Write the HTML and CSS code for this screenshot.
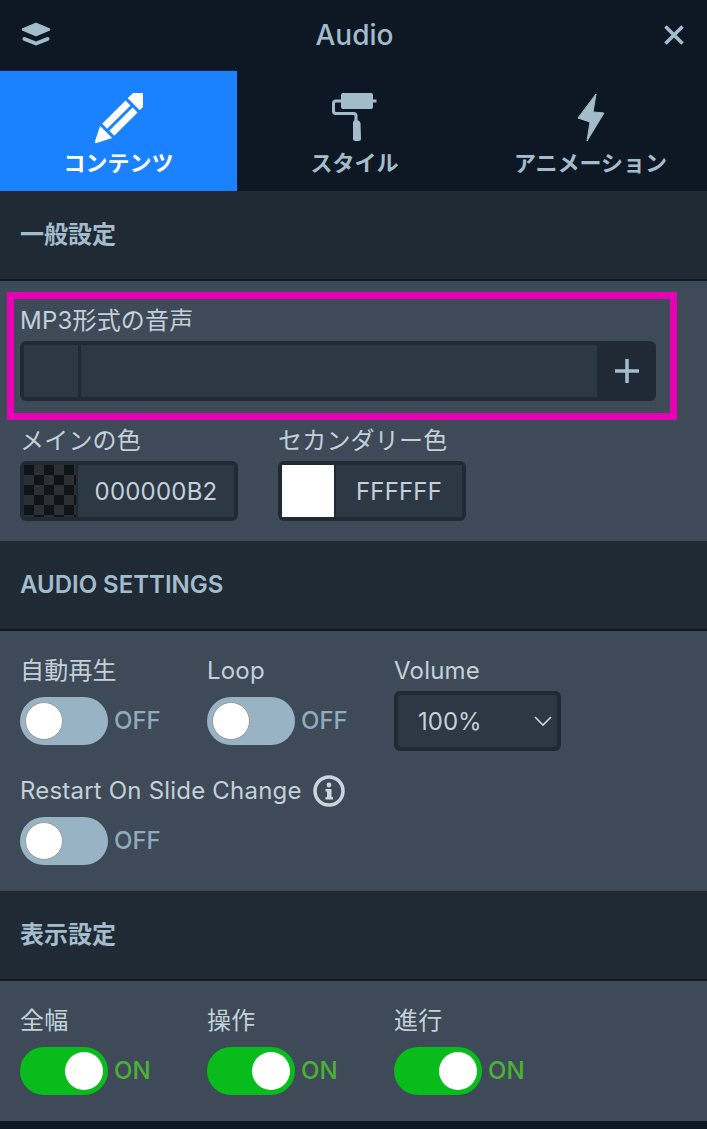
FILE: index.html
```html
<!DOCTYPE html>
<html lang="ja">
<head>
    <meta charset="UTF-8">
    <meta name="viewport" content="width=device-width, initial-scale=1.0">
    <title>Audio</title>
    <link rel="stylesheet" href="styles.css">
</head>
<body>
    <div class="panel">
        <div class="topbar">
            <svg class="layers" viewBox="0 0 30 30"><path d="M15 4l13 5.500-13 5.500L2 9.500z" stroke="#a3bccb" stroke-width="2.500" stroke-linejoin="round" fill="#a3bccb"/><path d="M3.500 19L15 23.500 26.500 19" stroke="#a3bccb" stroke-width="4" stroke-linejoin="round" stroke-linecap="round" fill="none"/></svg>
            <div class="title">Audio</div>
            <svg class="close" viewBox="0 0 22 22"><path d="M2.500 2.500l17 17M19.500 2.500l-17 17" stroke="#a3bccb" stroke-width="3.600" fill="none"/></svg>
        </div>

        <div class="tabs">
            <div class="tab active">
                <svg class="tab-icon" viewBox="0 0 48 50">
                    <g transform="translate(0.500 49.500) rotate(-45)" fill="#fff">
                        <path d="M1 -1.500L15 -8.500V8.500L1 1.500a1.500 1.500 0 0 1 0 -3z"/>
                        <rect x="18" y="-8.500" width="33" height="7"/>
                        <rect x="18" y="1.500" width="33" height="7"/>
                        <path d="M54 -8.500h6a8.500 8.500 0 0 1 0 17h-6z"/>
                    </g>
                </svg>
                <span>コンテンツ</span>
            </div>
            <div class="tab">
                <svg class="tab-icon" viewBox="0 0 48 50"><rect x="10" y="0" width="32" height="16" rx="2" fill="#a3bccb"/><rect x="42" y="6.500" width="3.500" height="3" fill="#a3bccb"/><path d="M11 8H5a2.500 2.500 0 0 0-2.500 2.500V18A2.500 2.500 0 0 0 5 20.500h17.500a2.500 2.500 0 0 1 2.500 2.500v6" stroke="#a3bccb" stroke-width="3" fill="none"/><path d="M22 30c0-2 1-3 3-3s4 1 4.500 3l.5 15.500a2.500 2.500 0 0 1-2.500 2.500h-3a2.500 2.500 0 0 1-2.500-2.500z" fill="#a3bccb"/></svg>
                <span>スタイル</span>
            </div>
            <div class="tab">
                <svg class="tab-icon" viewBox="0 0 48 50"><path fill="#a3bccb" stroke="#a3bccb" stroke-linejoin="round" d="M30 1L12 25l12 4-3 19 17-28-11-1z"/></svg>
                <span>アニメーション</span>
            </div>
        </div>

        <div class="section-head">一般設定</div>
        <div class="section-body general">
            <div class="highlight">
                <div class="label">MP3形式の音声</div>
                <div class="file-field">
                    <div class="file-thumb"></div>
                    <div class="file-name"></div>
                    <div class="file-add">
                        <svg viewBox="0 0 24 24"><path d="M12 0v24M0 12h24" stroke="#a3bccb" stroke-width="3.500" fill="none"/></svg>
                    </div>
                </div>
            </div>
            <div class="colors">
                <div>
                    <div class="label">メインの色</div>
                    <div class="color-field">
                        <div class="swatch checker"></div>
                        <div class="color-value wide">000000B2</div>
                    </div>
                </div>
                <div>
                    <div class="label">セカンダリー色</div>
                    <div class="color-field">
                        <div class="swatch white"></div>
                        <div class="color-value">FFFFFF</div>
                    </div>
                </div>
            </div>
        </div>

        <div class="section-head">AUDIO SETTINGS</div>
        <div class="section-body audio">
            <div class="row">
                <div class="cell">
                    <div class="label">自動再生</div>
                    <div class="switch-line"><div class="switch"><i></i></div><span>OFF</span></div>
                </div>
                <div class="cell">
                    <div class="label">Loop</div>
                    <div class="switch-line"><div class="switch"><i></i></div><span>OFF</span></div>
                </div>
                <div class="cell">
                    <div class="label">Volume</div>
                    <div class="select">
                        <span>100%</span>
                        <svg viewBox="0 0 18 11"><path d="M1 1l8 8 8-8" stroke="#c9d6df" stroke-width="1.600" fill="none"/></svg>
                    </div>
                </div>
            </div>
            <div class="row">
                <div class="cell">
                    <div class="label nowrap">Restart On Slide Change
                        <svg class="info" viewBox="0 0 32 32"><circle cx="16" cy="16" r="14" stroke="#c9d6df" stroke-width="3.500" fill="none"/><rect x="14" y="14" width="4.500" height="10" fill="#c9d6df"/><rect x="12.500" y="22" width="7.500" height="2.500" fill="#c9d6df"/><rect x="12.500" y="14" width="4" height="2.500" fill="#c9d6df"/><circle cx="16" cy="10" r="2.400" fill="#c9d6df"/></svg>
                    </div>
                    <div class="switch-line"><div class="switch"><i></i></div><span>OFF</span></div>
                </div>
            </div>
        </div>

        <div class="section-head">表示設定</div>
        <div class="section-body display">
            <div class="row">
                <div class="cell">
                    <div class="label">全幅</div>
                    <div class="switch-line on"><div class="switch"><i></i></div><span>ON</span></div>
                </div>
                <div class="cell">
                    <div class="label">操作</div>
                    <div class="switch-line on"><div class="switch"><i></i></div><span>ON</span></div>
                </div>
                <div class="cell">
                    <div class="label">進行</div>
                    <div class="switch-line on"><div class="switch"><i></i></div><span>ON</span></div>
                </div>
            </div>
        </div>
    </div>
</body>
</html>
```

FILE: styles.css
```css
* {
    box-sizing: border-box;
}
html, body {
    margin: 0;
    height: 100%;
    background-color: #0e1824;
}
body {
    font-family: Inter, "Noto Sans CJK JP", sans-serif;
    color: #c3d0da;
    overflow: hidden;
}
.panel {
    width: 707px;
}
.topbar {
    display: flex;
    align-items: center;
    justify-content: space-between;
    height: 71px;
    padding: 0 22px 1px 21px;
    background-color: #0e1824;
}
.layers {
    width: 30px;
    height: 30px;
}
.close {
    width: 22px;
    height: 22px;
}
.title {
    margin-right: 5px;
    font-size: 28px;
    font-weight: 500;
    color: #a3bccb;
}
.tabs {
    display: flex;
    height: 120px;
    background-color: #0e1824;
}
.tab {
    display: flex;
    flex-direction: column;
    align-items: center;
    width: 235px;
    padding-top: 22px;
    font-size: 22px;
    font-weight: 700;
    color: #a3bccb;
}
.tab span {
    margin-top: 2px;
    white-space: nowrap;
}
.tab:last-child span {
    margin-left: 2px;
}
.tab.active {
    width: 237px;
    background-color: #1a82ff;
    color: #fff;
}
.tab-icon {
    width: 48px;
    height: 50px;
}
.section-head {
    height: 90px;
    padding: 29px 20px 0;
    font-size: 24px;
    font-weight: 600;
    line-height: 30px;
    color: #a3bccb;
    background-color: #1f2a35;
    border-bottom: 2px solid #0f1a26;
}
.section-body {
    background-color: #3e4a58;
}
.general {
    height: 260px;
    padding: 11px 0 0 7px;
}
.audio {
    height: 260px;
    padding: 24px 0 0 20px;
}
.display {
    height: 140px;
    padding: 24px 0 0 20px;
}
.label {
    height: 31px;
    padding-top: 1px;
    font-size: 24px;
    line-height: 30px;
    letter-spacing: 0.2px;
    color: #c3d0da;
}
.nowrap {
    display: flex;
    align-items: center;
    gap: 11px;
    white-space: nowrap;
}
.highlight {
    width: 670px;
    height: 128px;
    padding: 6px 14px 0 6px;
    border: 7px solid #e800b4;
}
.highlight .label {
    margin-bottom: 5px;
}
.file-field {
    display: flex;
    height: 60px;
    background-color: #1f2a35;
    border-radius: 6px;
    border: 4px solid #1f2a35;
    border-right: 0;
}
.file-thumb {
    width: 54px;
    background-color: #2d3845;
}
.file-name {
    flex: 1;
    margin-left: 3px;
    background-color: #2d3845;
}
.file-add {
    display: flex;
    align-items: center;
    justify-content: center;
    width: 59px;
}
.file-add svg {
    width: 24px;
    height: 24px;
}
.colors {
    display: flex;
    gap: 40px;
    margin: 5px 0 0 13px;
}
.colors .label {
    margin-bottom: 5px;
}
.color-field {
    display: flex;
    height: 60px;
    padding: 4px;
    background-color: #1f2a35;
    border-radius: 6px;
}
.swatch {
    width: 52px;
}
.white {
    background-color: #fff;
}
.checker {
    background: repeating-conic-gradient(#2c3033 0 25%, #0e1418 0 50%) 0 0 / 20px 20px;
}
.color-value {
    display: flex;
    align-items: center;
    justify-content: center;
    width: 126px;
    margin-left: 2px;
    font-size: 24px;
    letter-spacing: 0.2px;
    background-color: #2d3845;
}
.color-value.wide {
    width: 156px;
}
.row {
    display: flex;
    margin-bottom: 24px;
}
.cell {
    width: 187px;
}
.switch-line {
    display: flex;
    align-items: center;
    gap: 6px;
    margin-top: 11px;
    font-size: 24px;
    font-weight: 500;
    color: #8fabbc;
}
.switch-line span {
    margin-top: -2px;
}
.switch-line.on {
    color: #4cb135;
}
.switch {
    position: relative;
    width: 88px;
    height: 48px;
    border-radius: 24px;
    background-color: #97b3c4;
}
.switch i {
    position: absolute;
    top: 5px;
    left: 5px;
    width: 38px;
    height: 38px;
    border-radius: 50%;
    background-color: #fff;
    border: 1px solid #9a9a9a;
}
.on .switch {
    background-color: #08bc1c;
}
.on .switch i {
    left: 45px;
    border: 0;
}
.select {
    display: flex;
    align-items: center;
    justify-content: space-between;
    width: 167px;
    height: 60px;
    margin-top: 5px;
    padding: 0 5px 0 20px;
    font-size: 24px;
    background-color: #2d3845;
    border: 4px solid #1f2a35;
    border-radius: 6px;
}
.select svg {
    width: 18px;
    height: 11px;
}
.info {
    flex-shrink: 0;
    width: 32px;
    height: 32px;
    margin: -1px 0;
}
```
